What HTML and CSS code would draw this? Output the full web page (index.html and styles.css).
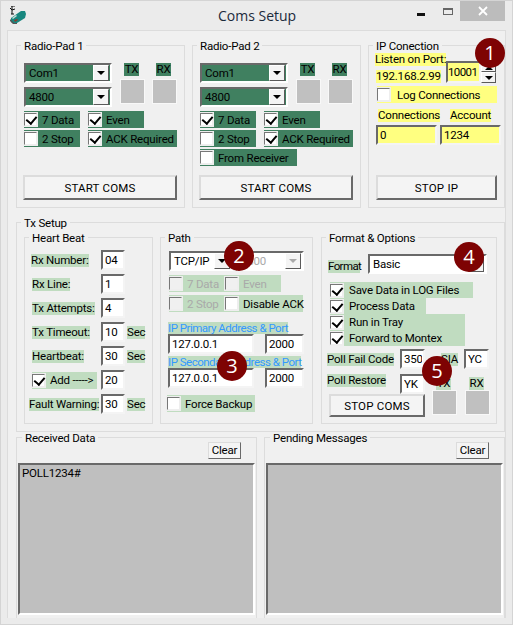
FILE: index.html
```html
<!DOCTYPE html>
<html lang="en">
<head>
    <meta charset="UTF-8">
    <meta name="viewport" content="width=device-width, initial-scale=1.0">
    <title>Coms Setup</title>
    <link rel="stylesheet" href="styles.css">
</head>
<body>
    <div class="window">
        <div class="title-bar">
            <svg class="app-icon" width="18" height="20" viewBox="0 0 18 20">
                <path d="M1 0h4M2 0v8M0 2l2 2 3-1M1 8h3" stroke="#111" stroke-width="1" fill="none"/>
                <path d="M1 12L11 5l4 0 1 3-1 4-8 5-3 1-3-2z" fill="#17877f"/>
                <path d="M0 13l4 4 3 0 0 1-4 0-3-3z" fill="#555"/>
                <path d="M2 12l4-3 1 1-4 3z" fill="#c9ded9"/>
                <path d="M4 14l3-1 1 1-3 2z" fill="#8a3b2e"/>
            </svg>
            <div class="title-text">Coms Setup</div>
            <div class="win-min"></div>
            <div class="win-max"></div>
            <div class="win-close">
                <svg width="10" height="10" viewBox="0 0 10 10"><path d="M1 1l8 8M9 1l-8 8" stroke="#fff" stroke-width="1.8"/></svg>
            </div>
        </div>

        <div class="client">
            <div class="top-row">
                <fieldset class="group pad-group">
                    <legend>Radio-Pad 1</legend>
                    <div class="pad-body">
                        <div class="pad-top">
                            <div class="combo-col">
                                <div class="combo dark"><span>Com1</span><i class="arrow"></i></div>
                                <div class="combo dark"><span>4800</span><i class="arrow"></i></div>
                            </div>
                            <div class="lamps">
                                <div class="lamp"><span class="tag dark">TX</span><div class="lamp-box"></div></div>
                                <div class="lamp"><span class="tag dark">RX</span><div class="lamp-box"></div></div>
                            </div>
                        </div>
                        <div class="pad-checks">
                            <label class="check dark w56"><input type="checkbox" checked>7 Data</label>
                            <label class="check dark w56"><input type="checkbox" checked>Even</label>
                            <label class="check dark w56"><input type="checkbox">2 Stop</label>
                            <label class="check dark w89"><input type="checkbox" checked>ACK Required</label>
                        </div>
                        <button class="btn pad-btn">START COMS</button>
                    </div>
                </fieldset>

                <fieldset class="group pad-group">
                    <legend>Radio-Pad 2</legend>
                    <div class="pad-body">
                        <div class="pad-top">
                            <div class="combo-col">
                                <div class="combo dark"><span>Com1</span><i class="arrow"></i></div>
                                <div class="combo dark"><span>4800</span><i class="arrow"></i></div>
                            </div>
                            <div class="lamps">
                                <div class="lamp"><span class="tag dark">TX</span><div class="lamp-box"></div></div>
                                <div class="lamp"><span class="tag dark">RX</span><div class="lamp-box"></div></div>
                            </div>
                        </div>
                        <div class="pad-checks">
                            <label class="check dark w56"><input type="checkbox" checked>7 Data</label>
                            <label class="check dark w56"><input type="checkbox" checked>Even</label>
                            <label class="check dark w56"><input type="checkbox">2 Stop</label>
                            <label class="check dark w89"><input type="checkbox" checked>ACK Required</label>
                            <label class="check dark from-receiver"><input type="checkbox">From Receiver</label>
                        </div>
                        <button class="btn pad-btn">START COMS</button>
                    </div>
                </fieldset>

                <fieldset class="group ip-group">
                    <legend>IP Conection</legend>
                    <div class="ip-body">
                        <div class="ip-top">
                            <div class="ip-left">
                                <span class="tag yellow">Listen on Port:</span>
                                <span class="tag yellow ip-address">192.168.2.99</span>
                            </div>
                            <input class="field yellow port-field" value="10001">
                            <div class="spin"><div class="spin-btn"><i class="arrow up"></i></div><div class="spin-btn"><i class="arrow"></i></div></div>
                        </div>
                        <label class="check yellow log-check"><input type="checkbox">Log Connections</label>
                        <div class="ip-grid">
                            <span class="tag yellow conn-tag">Connections</span>
                            <span class="tag yellow acct-tag">Account</span>
                            <input class="field yellow" value="0">
                            <input class="field yellow" value="1234">
                        </div>
                        <button class="btn stop-ip">STOP IP</button>
                    </div>
                </fieldset>
            </div>

            <fieldset class="group tx-group">
                <legend>Tx Setup</legend>
                <div class="tx-row">
                    <fieldset class="group heart-group">
                        <legend>Heart Beat</legend>
                        <div class="heart-grid">
                            <span class="tag light hb-a">Rx Number:</span><input class="field" value="04"><span></span>
                            <span class="tag light hb-b">Rx Line:</span><input class="field" value="1"><span></span>
                            <span class="tag light hb-b">Tx Attempts:</span><input class="field" value="4"><span></span>
                            <span class="tag light hb-b">Tx Timeout:</span><input class="field" value="10"><span class="tag light">Sec</span>
                            <span class="tag light hb-b">Heartbeat:</span><input class="field" value="30"><span class="tag light">Sec</span>
                            <label class="check light hb-add"><input type="checkbox" checked>Add -----&gt;</label><input class="field" value="20"><span></span>
                            <span class="tag light">Fault Warning:</span><input class="field" value="30"><span class="tag light">Sec</span>
                        </div>
                    </fieldset>

                    <fieldset class="group path-group">
                        <legend>Path</legend>
                        <div class="path-body">
                            <div class="path-combos">
                                <div class="combo tcp-combo"><span>TCP/IP</span><i class="arrow"></i></div>
                                <div class="combo baud-combo off"><span>4800</span><i class="arrow"></i></div>
                            </div>
                            <div class="path-checks">
                                <label class="check light off w56"><input type="checkbox" disabled>7 Data</label>
                                <label class="check light off w56"><input type="checkbox" disabled>Even</label>
                                <label class="check light off w56"><input type="checkbox" disabled>2 Stop</label>
                                <label class="check light w78"><input type="checkbox">Disable ACK</label>
                            </div>
                            <span class="tag light ip-link first-link">IP Primary Address &amp; Port</span>
                            <div class="addr-row"><input class="field" value="127.0.0.1"><input class="field" value="2000"></div>
                            <span class="tag light ip-link second-link">IP Secondary Address &amp; Port</span>
                            <div class="addr-row"><input class="field" value="127.0.0.1"><input class="field" value="2000"></div>
                            <label class="check light force-check"><input type="checkbox">Force Backup</label>
                        </div>
                    </fieldset>

                    <fieldset class="group format-group">
                        <legend>Format &amp; Options</legend>
                        <div class="format-body">
                            <div class="format-row">
                                <span class="tag light">Format</span>
                                <div class="combo format-combo"><span>Basic</span><i class="arrow"></i></div>
                            </div>
                            <div class="option-list">
                                <label class="check light w143"><input type="checkbox" checked>Save Data in LOG Files</label>
                                <label class="check light w96"><input type="checkbox" checked>Process Data</label>
                                <label class="check light w135"><input type="checkbox" checked>Run in Tray</label>
                                <label class="check light w135"><input type="checkbox" checked>Forward to Montex</label>
                            </div>
                            <div class="poll-row">
                                <span class="tag light poll-label">Poll Fail Code</span>
                                <input class="field poll-field" value="350">
                                <span class="tag light sia-tag">SIA</span>
                                <input class="field poll-field" value="YC">
                            </div>
                            <div class="poll-bottom">
                                <div class="poll-left">
                                    <div class="poll-restore">
                                        <span class="tag light poll-label">Poll Restore</span>
                                        <input class="field poll-field" value="YK">
                                    </div>
                                    <button class="btn stop-coms">STOP COMS</button>
                                </div>
                                <div class="lamps poll-lamps">
                                    <div class="lamp"><span class="tag light">TX</span><div class="lamp-box"></div></div>
                                    <div class="lamp"><span class="tag light">RX</span><div class="lamp-box"></div></div>
                                </div>
                            </div>
                        </div>
                    </fieldset>
                </div>
            </fieldset>

            <div class="bottom-row">
                <fieldset class="group log-group">
                    <legend>Received Data</legend>
                    <button class="btn clear-btn">Clear</button>
                    <div class="memo">POLL1234#</div>
                </fieldset>
                <fieldset class="group log-group">
                    <legend>Pending Messages</legend>
                    <button class="btn clear-btn">Clear</button>
                    <div class="memo"></div>
                </fieldset>
            </div>
        </div>

        <div class="badge b1">1</div>
        <div class="badge b2">2</div>
        <div class="badge b3">3</div>
        <div class="badge b4">4</div>
        <div class="badge b5">5</div>
    </div>
</body>
</html>
```

FILE: styles.css
```css
* {
    box-sizing: border-box;
}
body {
    padding: 0;
    margin: 0;
    font-family: Roboto, "Liberation Sans", sans-serif;
    font-size: 11.5px;
    letter-spacing: -0.2px;
    color: #000;
}
.window {
    position: relative;
    width: 513px;
    height: 625px;
    background: #ebebeb;
    border: 1px solid #d4d4d4;
    overflow: hidden;
}

/* title bar */
.title-bar {
    display: flex;
    align-items: flex-start;
    height: 29px;
    position: relative;
}
.app-icon {
    margin: 5px 0 0 9px;
}
.title-text {
    width: 78px;
    margin: 5px 0 0 190px;
    font-family: "Open Sans", sans-serif;
    font-size: 14px;
    line-height: 20px;
    letter-spacing: 0;
    white-space: nowrap;
    color: #1b2a3b;
}
.win-min {
    width: 8px;
    height: 3px;
    margin: 12px 0 0 121px;
    background: #111;
}
.win-max {
    width: 10px;
    height: 7px;
    margin: 7px 0 0 18px;
    border: 1px solid #666;
    border-top-width: 2px;
}
.win-close {
    display: flex;
    align-items: center;
    justify-content: center;
    width: 45px;
    height: 20px;
    margin-left: 7px;
    background: #bcbcbc;
}

/* client area */
.client {
    width: 499px;
    height: 588px;
    margin-left: 6px;
    padding: 7px 0 0 8px;
    background: #f0f0f0;
    border: 1px solid #dcdcdc;
    border-bottom: 0;
}
.top-row {
    display: flex;
    gap: 7px;
}
.group {
    margin: 0;
    padding: 0;
    min-width: 0;
    border: 1px solid #dcdcdc;
}
.group legend {
    margin-left: 4px;
    padding: 0 3px;
    height: 14px;
    line-height: 16px;
    white-space: nowrap;
}
.dark {
    background: #408060;
}
.light {
    background: #c0dcc0;
}
.yellow {
    background: #ffff80;
}
.tag {
    display: inline-block;
    height: 13px;
    line-height: 13px;
    white-space: nowrap;
    justify-self: start;
    align-self: center;
}

/* form controls */
.field,
.combo {
    height: 20px;
    border: 2px solid;
    border-color: #696969 #fff #fff #696969;
    font: inherit;
    letter-spacing: inherit;
    line-height: 16px;
    padding: 0 1px 0 2px;
}
.field {
    display: block;
    width: 100%;
    min-width: 0;
    background-color: #fff;
    border-right-color: #f4f4f4;
    border-bottom-color: #f4f4f4;
    outline: 0;
}
.field.yellow {
    background: #ffff80;
}
.combo {
    display: flex;
    justify-content: space-between;
    background: #fff;
}
.combo.dark {
    background: #408060;
}
.combo span {
    padding-left: 1px;
}
.arrow {
    display: flex;
    align-items: center;
    justify-content: center;
    flex: none;
    width: 16px;
    height: 16px;
    background: #f4f4f4;
    border: 1px solid;
    border-color: #fff #5a5a5a #5a5a5a #fff;
}
.arrow::after {
    content: "";
    border: 4px solid transparent;
    border-top: 4px solid #000;
    border-bottom: 0;
}
.arrow.up::after {
    border-top: 0;
    border-bottom: 4px solid #000;
}
.off {
    color: #a9a9a9;
}
.off .arrow::after {
    border-top-color: #a9a9a9;
}
.check {
    display: flex;
    align-items: center;
    height: 17px;
    white-space: nowrap;
}
.check input {
    appearance: none;
    position: relative;
    flex: none;
    width: 13px;
    height: 13px;
    margin: 0 5px 0 0;
    background: #fff;
    border: 1px solid;
    border-color: #777 #eee #eee #777;
    outline: 1px solid #eee;
}
.check input:checked::after {
    content: "";
    position: absolute;
    left: 3px;
    top: 0;
    width: 5px;
    height: 8px;
    border: solid #000;
    border-width: 0 2.5px 2.5px 0;
    transform: rotate(40deg);
}
.check input:disabled {
    background: #f0f0f0;
}
.w56 { width: 56px; }
.w78 { width: 78px; }
.w89 { width: 89px; }
.w96 { width: 96px; }
.w135 { width: 135px; }
.w143 { width: 143px; }
.btn {
    display: block;
    font: inherit;
    letter-spacing: 0.2px;
    padding: 0;
    color: #000;
    background: #f4f4f4;
    border: 2px solid;
    border-color: #dcdcdc #696969 #696969 #dcdcdc;
}

/* radio pads */
.pad-group {
    width: 169px;
    height: 170px;
}
.pad-body {
    display: flex;
    flex-direction: column;
    height: 148px;
    padding: 11px 6px 0 7px;
}
.pad-top {
    display: flex;
    gap: 8px;
}
.combo-col {
    display: flex;
    flex-direction: column;
    gap: 4px;
    width: 88px;
}
.lamps {
    display: flex;
    gap: 7px;
}
.lamp {
    display: flex;
    flex-direction: column;
    align-items: center;
    width: 25px;
    gap: 3px;
}
.lamp .tag {
    padding: 0 1px;
    margin-right: 2px;
}
.lamp-box {
    width: 25px;
    height: 25px;
    background: #c0c0c0;
    border: 1px solid #f8f8f8;
}
.pad-checks {
    display: grid;
    grid-template-columns: 56px 89px;
    gap: 2px 8px;
    margin-top: 4px;
}
.from-receiver {
    grid-column: span 2;
    width: 97px;
}
.pad-btn {
    width: 154px;
    height: 25px;
    margin: auto 0 0 -1px;
}

/* ip */
.ip-group {
    width: 137px;
    height: 170px;
}
.ip-body {
    display: flex;
    flex-direction: column;
    height: 148px;
    padding: 1px 0 0 7px;
}
.ip-top {
    display: flex;
    align-items: flex-start;
}
.ip-left {
    display: flex;
    flex-direction: column;
    align-items: flex-start;
    width: 71px;
    margin-left: -1px;
    gap: 4px;
}
.ip-left .tag {
    align-self: flex-start;
}
.ip-address {
    margin-left: 1px;
}
.port-field {
    width: 35px;
    height: 22px;
    margin-top: 8px;
    padding: 0;
    letter-spacing: -0.6px;
}
.spin {
    width: 15px;
    margin-top: 8px;
}
.spin .arrow,
.spin-btn {
    width: 15px;
    height: 11px;
}
.spin .arrow.up {
    align-items: flex-end;
    padding-bottom: 1px;
}
.log-check {
    width: 120px;
    margin: 3px 0 0 1px;
}
.log-check input {
    margin-right: 7px;
}
.ip-grid {
    display: grid;
    grid-template-columns: 61px 61px;
    gap: 3px;
    margin-top: 6px;
}
.conn-tag {
    margin-left: 2px;
}
.acct-tag {
    margin-left: 10px;
}
.stop-ip {
    width: 121px;
    height: 25px;
    margin-top: auto;
}

/* tx setup */
.tx-group {
    width: 489px;
    height: 217px;
    margin-top: 7px;
}
.tx-row {
    display: flex;
    gap: 7px;
    padding: 1px 0 0 7px;
}
.heart-group,
.path-group,
.format-group {
    height: 194px;
}
.heart-group {
    width: 129px;
}
.heart-grid {
    display: grid;
    grid-template-columns: 72px 24px 22px;
    grid-auto-rows: 20px;
    gap: 4px 0;
    padding: 6px 0 0 4px;
}
.heart-grid .tag:nth-child(3n) {
    margin-left: 2px;
}
.hb-a {
    margin-left: 2px;
}
.hb-b {
    margin-left: 3px;
}
.hb-add {
    width: 65px;
    margin-left: 3px;
    align-self: center;
}
.path-group {
    width: 153px;
}
.path-body {
    display: flex;
    flex-direction: column;
    align-items: flex-start;
    padding: 7px 0 0 7px;
}
.path-combos {
    display: flex;
    gap: 3px;
    margin-left: 1px;
}
.tcp-combo {
    width: 64px;
}
.baud-combo {
    width: 68px;
}
.path-checks {
    display: grid;
    grid-template-columns: 56px 78px;
    row-gap: 3px;
    margin: 4px 0 0 1px;
}
.ip-link {
    align-self: flex-start;
    height: 12px;
    line-height: 12px;
    color: #3399ff;
    letter-spacing: -0.5px;
}
.first-link {
    margin-top: 10px;
}
.second-link {
    margin-top: 2px;
}
.addr-row {
    display: grid;
    grid-template-columns: 86px 39px;
    column-gap: 11px;
}
.force-check {
    width: 88px;
    margin: 7px 0 0 -1px;
}
.format-group {
    width: 176px;
    margin-left: 1px;
}
.format-body {
    padding: 10px 0 0 6px;
}
.format-row {
    display: flex;
    gap: 8px;
}
.format-row .tag {
    width: 32px;
    margin-top: 6px;
    align-self: flex-start;
    letter-spacing: -0.6px;
}
.format-combo {
    width: 119px;
}
.option-list {
    display: flex;
    flex-direction: column;
    margin: 8px 0 0 2px;
}
.option-list .check {
    height: 16px;
}
.option-list input {
    margin-right: 6px;
}
.poll-row {
    display: grid;
    grid-template-columns: 73px 25px 39px 25px;
    margin: 3px 0 0 -1px;
}
.sia-tag {
    margin-left: 16px;
}
.poll-bottom {
    display: flex;
    margin: 5px 0 0 -1px;
}
.poll-left {
    width: 98px;
}
.poll-restore {
    display: grid;
    grid-template-columns: 73px 25px;
}
.poll-restore .poll-label {
    align-self: start;
}
.stop-coms {
    width: 96px;
    height: 23px;
    margin-left: 2px;
}
.poll-lamps {
    gap: 8px;
    margin: 3px 0 0 7px;
}
.poll-lamps .lamp {
    gap: 0;
}

/* logs */
.bottom-row {
    display: flex;
    gap: 7px;
    margin-top: -2px;
}
.log-group {
    width: 241px;
    height: 188px;
    padding: 0 1px;
    border-bottom: 0;
}
.clear-btn {
    width: 33px;
    height: 17px;
    margin: -2px 14px 0 auto;
    line-height: 13px;
    letter-spacing: -0.2px;
    border-width: 1px;
}
.memo {
    width: 237px;
    height: 152px;
    margin-top: 4px;
    padding: 1px 2px;
    line-height: 15px;
    background: #bfbfbf;
    border: 2px solid;
    border-color: #696969 #fff #fff #696969;
}

/* numbered call-outs */
.badge {
    position: absolute;
    width: 30px;
    height: 30px;
    border-radius: 50%;
    background: #7e0303;
    color: #fff;
    font-family: "Open Sans", sans-serif;
    font-size: 20px;
    letter-spacing: 0;
    line-height: 30px;
    text-align: center;
}
.b1 { left: 474px; top: 37px; }
.b2 { left: 223px; top: 240px; }
.b3 { left: 216px; top: 350px; }
.b4 { left: 453px; top: 241px; }
.b5 { left: 421px; top: 355px; }
```
